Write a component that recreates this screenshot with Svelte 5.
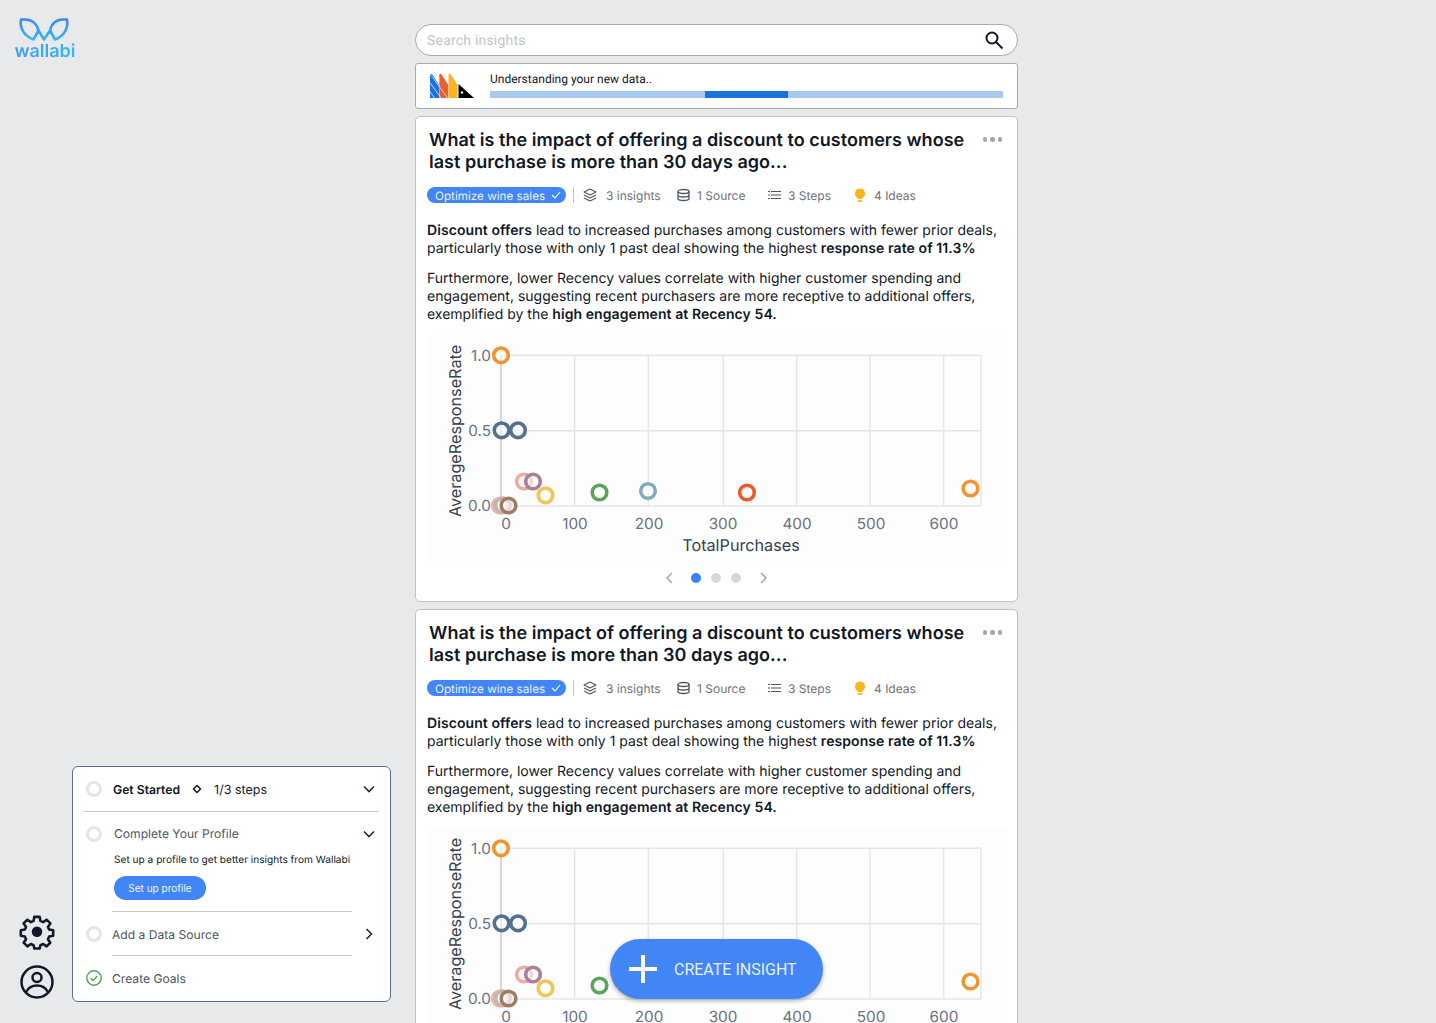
<script>
  const cards = [1, 2];
  const points = [
    [501, 355.3, '#f2932e'], [501.6, 430.3, '#54708f'], [518, 430.3, '#54708f'],
    [524, 481.5, '#f0aaa2'], [533, 481.5, '#ab7f9a'], [545.5, 495.3, '#f0c654'],
    [599.5, 492.5, '#5aa55a'], [648, 491, '#80adb9'], [747, 492.5, '#ef5a2b'],
    [970.5, 488.5, '#f2952f'], [500, 505.5, '#f0b0a8'], [503, 505.3, '#c2b6b2'], [508.5, 505.5, '#a17c60']
  ];
  const gridX = [574.7, 648.3, 723.3, 796.7, 870, 943.7];
  const xTicks = [[506, '0'], [575, '100'], [649, '200'], [723, '300'], [797, '400'], [871, '500'], [944, '600']];
  const yTicks = [[355.3, '1.0'], [430.5, '0.5'], [505, '0.0']];
</script>

<div class="page">
  <aside class="side">
    <div class="logo">
      <svg class="ears" width="62" height="26" viewBox="14 17 62 26" fill="none">
        <defs>
          <linearGradient id="lg" x1="0" y1="17" x2="0" y2="43" gradientUnits="userSpaceOnUse">
            <stop offset="0" stop-color="#3b82f6" /><stop offset="1" stop-color="#38bdf8" />
          </linearGradient>
        </defs>
        <path d="M38.500 31C37.500 24 32 19.500 25 19.500H21C19.500 28 24 36 33.500 39.500L38.500 30.500L44 39.500L50 30.500L55 39.500C64.500 36 68.500 28 67 19.500H63C56 19.500 51 24 50 31" stroke="url(#lg)" stroke-width="2.600" stroke-linejoin="round" stroke-linecap="round" />
      </svg>
      <span class="wordmark">wallabi</span>
    </div>
    <div class="bottom">
      <div class="rail">
        <svg width="36" height="36" viewBox="0 0 24 24" fill="none" stroke="#111827" stroke-width="1.700" stroke-linejoin="round">
          <path d="M10.200 2.500h3.600l.5 2.700 1.800.8 2.300-1.600 2.500 2.500-1.600 2.300.8 1.800 2.700.5v3.600l-2.700.5-.8 1.800 1.600 2.300-2.500 2.500-2.300-1.600-1.800.8-.5 2.200h-3.600l-.5-2.200-1.800-.8-2.300 1.600-2.500-2.500 1.600-2.300-.8-1.800-2.700-.5v-3.600l2.700-.5.8-1.800-1.600-2.300 2.500-2.500 2.300 1.600 1.800-.8z" transform="translate(0 -.6)" />
          <circle cx="12" cy="11.800" r="3.500" fill="#111827" stroke="none" />
        </svg>
        <svg width="36" height="36" viewBox="0 0 36 36" fill="none" stroke="#111827" stroke-width="2.500">
          <circle cx="18" cy="18" r="15.500" />
          <circle cx="18" cy="13.500" r="4.500" />
          <path d="M7 28c2.500-4.500 6.500-6.500 11-6.500s8.500 2 11 6.500" />
        </svg>
      </div>
      <section class="panel">
        <div class="head">
          <span class="ring"></span>
          <strong>Get Started</strong>
          <svg class="diamond" width="10" height="10" viewBox="0 0 10 10" fill="none" stroke="#111827" stroke-width="1.500"><path d="M5 1.500L8.500 5 5 8.500 1.500 5z" /></svg>
          <span class="steps">1/3 steps</span>
          <svg class="chev" width="12" height="8" viewBox="0 0 12 8" fill="none" stroke="#1f2937" stroke-width="1.600"><path d="M1 1.500l5 5 5-5" /></svg>
        </div>
        <div class="item open">
          <span class="ring"></span>
          <span class="label">Complete Your Profile</span>
          <svg class="chev" width="12" height="8" viewBox="0 0 12 8" fill="none" stroke="#1f2937" stroke-width="1.600"><path d="M1 1.500l5 5 5-5" /></svg>
        </div>
        <p class="hint">Set up a profile to get better insights from Wallabi</p>
        <button class="setup">Set up profile</button>
        <hr />
        <div class="item">
          <span class="ring"></span>
          <span class="label">Add a Data Source</span>
          <svg class="chev side-chev" width="8" height="12" viewBox="0 0 8 12" fill="none" stroke="#1f2937" stroke-width="1.600"><path d="M1.500 1l5 5-5 5" /></svg>
        </div>
        <hr />
        <div class="item">
          <svg class="tick" width="16" height="16" viewBox="0 0 16 16" fill="none" stroke="#4fa35f" stroke-width="1.400"><circle cx="8" cy="8" r="7.200" /><path d="M4.800 8.200l2.200 2.200 4.200-4.400" /></svg>
          <span class="label">Create Goals</span>
        </div>
      </section>
    </div>
  </aside>

  <main class="main">
    <div class="search">
      <span class="ph">Search insights</span>
      <svg width="20" height="20" viewBox="0 0 20 20" fill="none" stroke="#111827" stroke-width="2"><circle cx="8" cy="8" r="5.500" /><path d="M12 12l6.500 6.500" /></svg>
    </div>
    <div class="progress">
      <svg width="44" height="24" viewBox="0 0 44 24">
        <defs>
          <clipPath id="stripes"><path d="M0 0H2L9 11V24H0z M9.300 0H11.300L18.300 11V24H9.300z M18.600 0H20.600L27.600 11V24H18.600z" /></clipPath>
        </defs>
        <g clip-path="url(#stripes)">
          <rect x="0" width="9.150" height="24" fill="#1a73e0" />
          <rect x="9.150" width="9.300" height="24" fill="#ea5f2f" />
          <rect x="18.450" width="9.300" height="24" fill="#fbb41f" />
          <path d="M-2 6L30 50M-2 15L30 59M-2 -3L30 41" stroke="#fff" stroke-width=".7" />
        </g>
        <path d="M28.500 10L44 24H28.500z" fill="#000" />
        <circle cx="32" cy="18.500" r="1.200" fill="#fff" />
      </svg>
      <div class="progress-body">
        <span>Understanding your new data..</span>
        <div class="bar"><i></i></div>
      </div>
    </div>

    {#each cards as card (card)}
      <article class="card">
        <header>
          <h2>What is the impact of offering a discount to customers whose last purchase is more than 30 days ago...</h2>
          <div class="more"><i></i><i></i><i></i></div>
        </header>
        <div class="meta">
          <span class="pill"><span class="pill-t">Optimize wine sales</span>
            <svg width="10" height="8" viewBox="0 0 10 8" fill="none" stroke="#fff" stroke-width="1.100"><path d="M1 4l3 3 5-6" /></svg>
          </span>
          <span class="sep"></span>
          <span class="m m1">
            <svg width="14" height="14" viewBox="0 0 14 14" fill="none" stroke="#4b5563" stroke-width="1.100" stroke-linejoin="round"><path d="M7 1L13 4 7 7 1 4z" /><path d="M1 7l6 3 6-3M1 10l6 3 6-3" /></svg>
            3 insights</span>
          <span class="m m2">
            <svg width="13" height="14" viewBox="0 0 13 14" fill="none" stroke="#4b5563" stroke-width="1.300"><ellipse cx="6.500" cy="3.500" rx="5.500" ry="2" /><path d="M1 3.500v7c0 1.100 2.500 2 5.500 2s5.500-.9 5.500-2v-7M1 7c0 1.100 2.500 2 5.500 2S12 8.100 12 7" /></svg>
            1 Source</span>
          <span class="m m3">
            <svg width="13" height="10" viewBox="0 0 13 10" fill="none" stroke="#4b5563" stroke-width="1.100"><path d="M3 1.500h10M3 5h10M3 8.500h10M0 1.500h2M0 5h2M0 8.500h2" /></svg>
            3 Steps</span>
          <span class="m m4">
            <svg width="12" height="15" viewBox="0 0 12 15"><path d="M6 .5a5 5 0 0 1 3 9c-.6.5-.8 1-.8 1.500H3.800c0-.5-.2-1-.8-1.500a5 5 0 0 1 3-9z" fill="#fbb41f" /><rect x="3.800" y="12.200" width="4.400" height="1.800" fill="#fbb41f" /></svg>
            4 Ideas</span>
        </div>
        <div class="copy">
          <p><b>Discount offers</b> lead to increased purchases among customers with fewer prior deals, particularly those with only 1 past deal showing the highest <b>response rate of 11.3%</b></p>
          <p>Furthermore, lower Recency values correlate with higher customer spending and engagement, suggesting recent purchasers are more receptive to additional offers, exemplified by the <b>high engagement at Recency 54.</b></p>
        </div>
        <div class="chart">
          <svg width="580" height="230" viewBox="427 335 580 230">
            <g stroke="#e6e6e6" stroke-width="1.500" fill="none">
              {#each gridX as x (x)}<line x1={x} x2={x} y1="355.300" y2="506" />{/each}
              <line x1="501" x2="981" y1="355.300" y2="355.300" />
              <line x1="501" x2="981" y1="430.700" y2="430.700" />
              <line x1="981" x2="981" y1="355.300" y2="506" />
              <line x1="501" x2="981" y1="506" y2="506" />
            </g>
            <line x1="501" x2="501" y1="355.300" y2="506" stroke="#c8c8c8" stroke-width="1.500" />
            {#each yTicks as t (t[1])}<text class="tick-t" x="491" y={t[0] + 5.500} text-anchor="end">{t[1]}</text>{/each}
            {#each xTicks as t (t[1])}<text class="tick-t" x={t[0]} y="528.500" text-anchor="middle">{t[1]}</text>{/each}
            <text class="axis-t" x="741" y="551" text-anchor="middle">TotalPurchases</text>
            <text class="axis-t" transform="translate(461 431) rotate(-90)" text-anchor="middle">AverageResponseRate</text>
            {#each points as p (p[0])}
              <circle cx={p[0]} cy={p[1]} r="7.300" fill="#fff" fill-opacity=".5" stroke={p[2]} stroke-width="3.600" />
            {/each}
          </svg>
        </div>
        <nav class="pager">
          <svg width="8" height="12" viewBox="0 0 8 12" fill="none" stroke="#a8abb0" stroke-width="1.600"><path d="M7 1L2 6l5 5" /></svg>
          <i class="on"></i><i></i><i></i>
          <svg width="8" height="12" viewBox="0 0 8 12" fill="none" stroke="#a8abb0" stroke-width="1.600"><path d="M1 1l5 5-5 5" /></svg>
        </nav>
      </article>
    {/each}
  </main>

  <button class="fab">
    <svg width="30" height="30" viewBox="0 0 30 30" fill="none" stroke="#fff" stroke-width="4"><path d="M15 1v28M1 15h28" /></svg>
    CREATE INSIGHT
  </button>
</div>

<style>
  :global(body) { background: #e8e9eb; font-family: Inter, "Liberation Sans", sans-serif; color: #111827; text-rendering: geometricPrecision; }
  .page { position: relative; height: 1023px; overflow: hidden; display: flex; }
  .side { width: 415px; flex: none; display: flex; flex-direction: column; justify-content: space-between; box-sizing: border-box; padding: 17px 24px 21px 0; }
  .logo { display: flex; flex-direction: column; align-items: center; width: 62px; margin-left: 14px; }
  .ears { display: block; }
  .wordmark { margin-top: -1px; font: 600 18px/20px Inter, sans-serif; background: linear-gradient(90deg, #3b9cf0, #38b6f8); -webkit-background-clip: text; background-clip: text; color: transparent; }
  .bottom { display: flex; align-items: flex-end; }
  .rail { width: 72px; flex: none; display: flex; flex-direction: column; align-items: center; padding: 0 0 2px 2px; box-sizing: border-box; gap: 14px; }
  .panel { width: 319px; height: 236px; box-sizing: border-box; background: #fff; border: 1px solid #5c7094; border-radius: 6px; padding: 0 11px; }
  .head { display: flex; align-items: center; height: 45px; border-bottom: 1px solid #c9cace; font-size: 12px; box-sizing: border-box; padding-left: 2px; }
  .head strong { font-weight: 600; margin-left: 11px; font-size: 12.200px; }
  .diamond { margin: 0 0 0 12px; }
  .steps { margin: 2px 0 0 12px; font-size: 12.500px; }
  .chev { margin-left: auto; margin-right: 4px; }
  .side-chev { margin-right: 6px; }
  .ring { width: 16px; height: 16px; flex: none; box-sizing: border-box; border: 3px solid #e5e5e7; border-radius: 50%; }
  .item { display: flex; align-items: center; box-sizing: border-box; height: 43px; padding: 1px 0 0 2px; font-size: 12.100px; color: #4b5563; }
  .item .label { margin: 0 0 0 10px; }
  .item.open { height: 44px; padding-top: 0; }
  .item.open .label { margin: -1px 0 0 12px; }
  .tick { flex: none; }
  .hint { margin: -6px 0 0 30px; font-size: 10.150px; line-height: 20px; height: 20px; color: #111827; }
  .setup { display: block; margin: 6px 0 0 30px; width: 92px; height: 24px; border: none; padding: 0; border-radius: 12px; background: #4285f4; color: #f2f6ff; font: 400 10px Inter, sans-serif; }
  hr { border: 0; border-top: 1px solid #c9cace; margin: 11px 27px 0 28px; height: 0; }
  hr + .item + hr { margin-top: 0; }
  .main { width: 603px; flex: none; padding-top: 24px; display: flex; flex-direction: column; gap: 7px; }
  .search { flex: none; height: 32px; box-sizing: border-box; background: #fff; border: 1px solid #a9abb1; border-radius: 16px; display: flex; align-items: center; justify-content: space-between; padding: 0 13px 0 11px; font: 400 14px Roboto, sans-serif; letter-spacing: .2px; color: #c3c4c8; }
  .ph { padding-top: 1px; }
  .progress { flex: none; height: 46px; box-sizing: border-box; background: #fff; border: 1px solid #a9abb1; border-radius: 3px; display: flex; align-items: flex-start; padding: 10px 14px 0 14px; }
  .progress-body { margin-left: 16px; flex: 1; font: 400 12px/10px Roboto, sans-serif; color: #111827; }
  .bar { margin-top: 7px; height: 7px; background: #a6c9f0; }
  .bar i { display: block; margin-left: 215px; width: 83px; height: 7px; background: #1a73dc; }
  .card { flex: none; height: 486px; box-sizing: border-box; background: #fff; border: 1px solid #bfc1c6; border-radius: 5px; padding: 13px 10px 0 11px; }
  .card header { display: flex; justify-content: space-between; padding-left: 2px; }
  h2 { margin: 0; flex: none; width: 545px; font: 600 18px/22px Inter, sans-serif; letter-spacing: .03px; color: #111827; }
  .more { display: flex; gap: 3px; margin: 7px 5px 0 0; }
  .more i { width: 4.500px; height: 4.500px; border-radius: 50%; background: #a3a6ac; }
  .meta { display: flex; align-items: center; height: 16px; margin-top: 13px; font-size: 12px; color: #6b7280; }
  .pill { width: 139px; height: 16px; box-sizing: border-box; flex: none; display: flex; justify-content: space-between; align-items: center; padding: 0 5px 0 8px; border-radius: 8px; background: #4285f4; color: #eaf1ff; font-size: 11.700px; line-height: 16px; }
  .pill-t { padding-top: 1px; }
  .sep { width: 1px; height: 16px; background: #c5c7cb; margin: 0 9px 0 7px; }
  .m { display: flex; align-items: center; flex: none; }
  .m svg { margin-right: 9px; }
  .m1 { width: 94px; }
  .m2 { width: 91px; }
  .m2 svg { margin-right: 7px; }
  .m3 { width: 86px; }
  .m3 svg { margin-right: 7px; }
  .m4 svg { margin-right: 8px; }
  .copy { margin-top: 19px; font-size: 14px; line-height: 18px; color: #111827; }
  .copy p { margin: 0 0 12px; }
  .copy p:last-child { margin-bottom: 11px; }
  .copy b { font-weight: 600; letter-spacing: .08px; }
  .chart { height: 230px; background: #fdfdfd; }
  .chart svg { display: block; }
  .tick-t { font: 400 15.300px Inter, sans-serif; fill: #6b7280; }
  .axis-t { font: 400 16.200px Inter, sans-serif; fill: #374151; }
  .pager { display: flex; align-items: center; justify-content: center; height: 26px; gap: 10px; padding-right: 1px; }
  .pager i { width: 10px; height: 10px; border-radius: 50%; background: #d6d7da; }
  .pager i.on { background: #3b82f6; }
  .pager svg:first-child { margin-right: 8px; }
  .pager svg:last-child { margin-left: 9px; }
  .fab { position: absolute; left: 610px; top: 939px; width: 213px; height: 60px; border: none; border-radius: 30px; background: #4285f4; color: #e8f0ff; font: 400 16px Roboto, sans-serif; display: flex; align-items: center; padding: 0 0 0 18px; gap: 16px; box-shadow: 0 2px 4px rgba(0,0,0,.3); }
</style>
